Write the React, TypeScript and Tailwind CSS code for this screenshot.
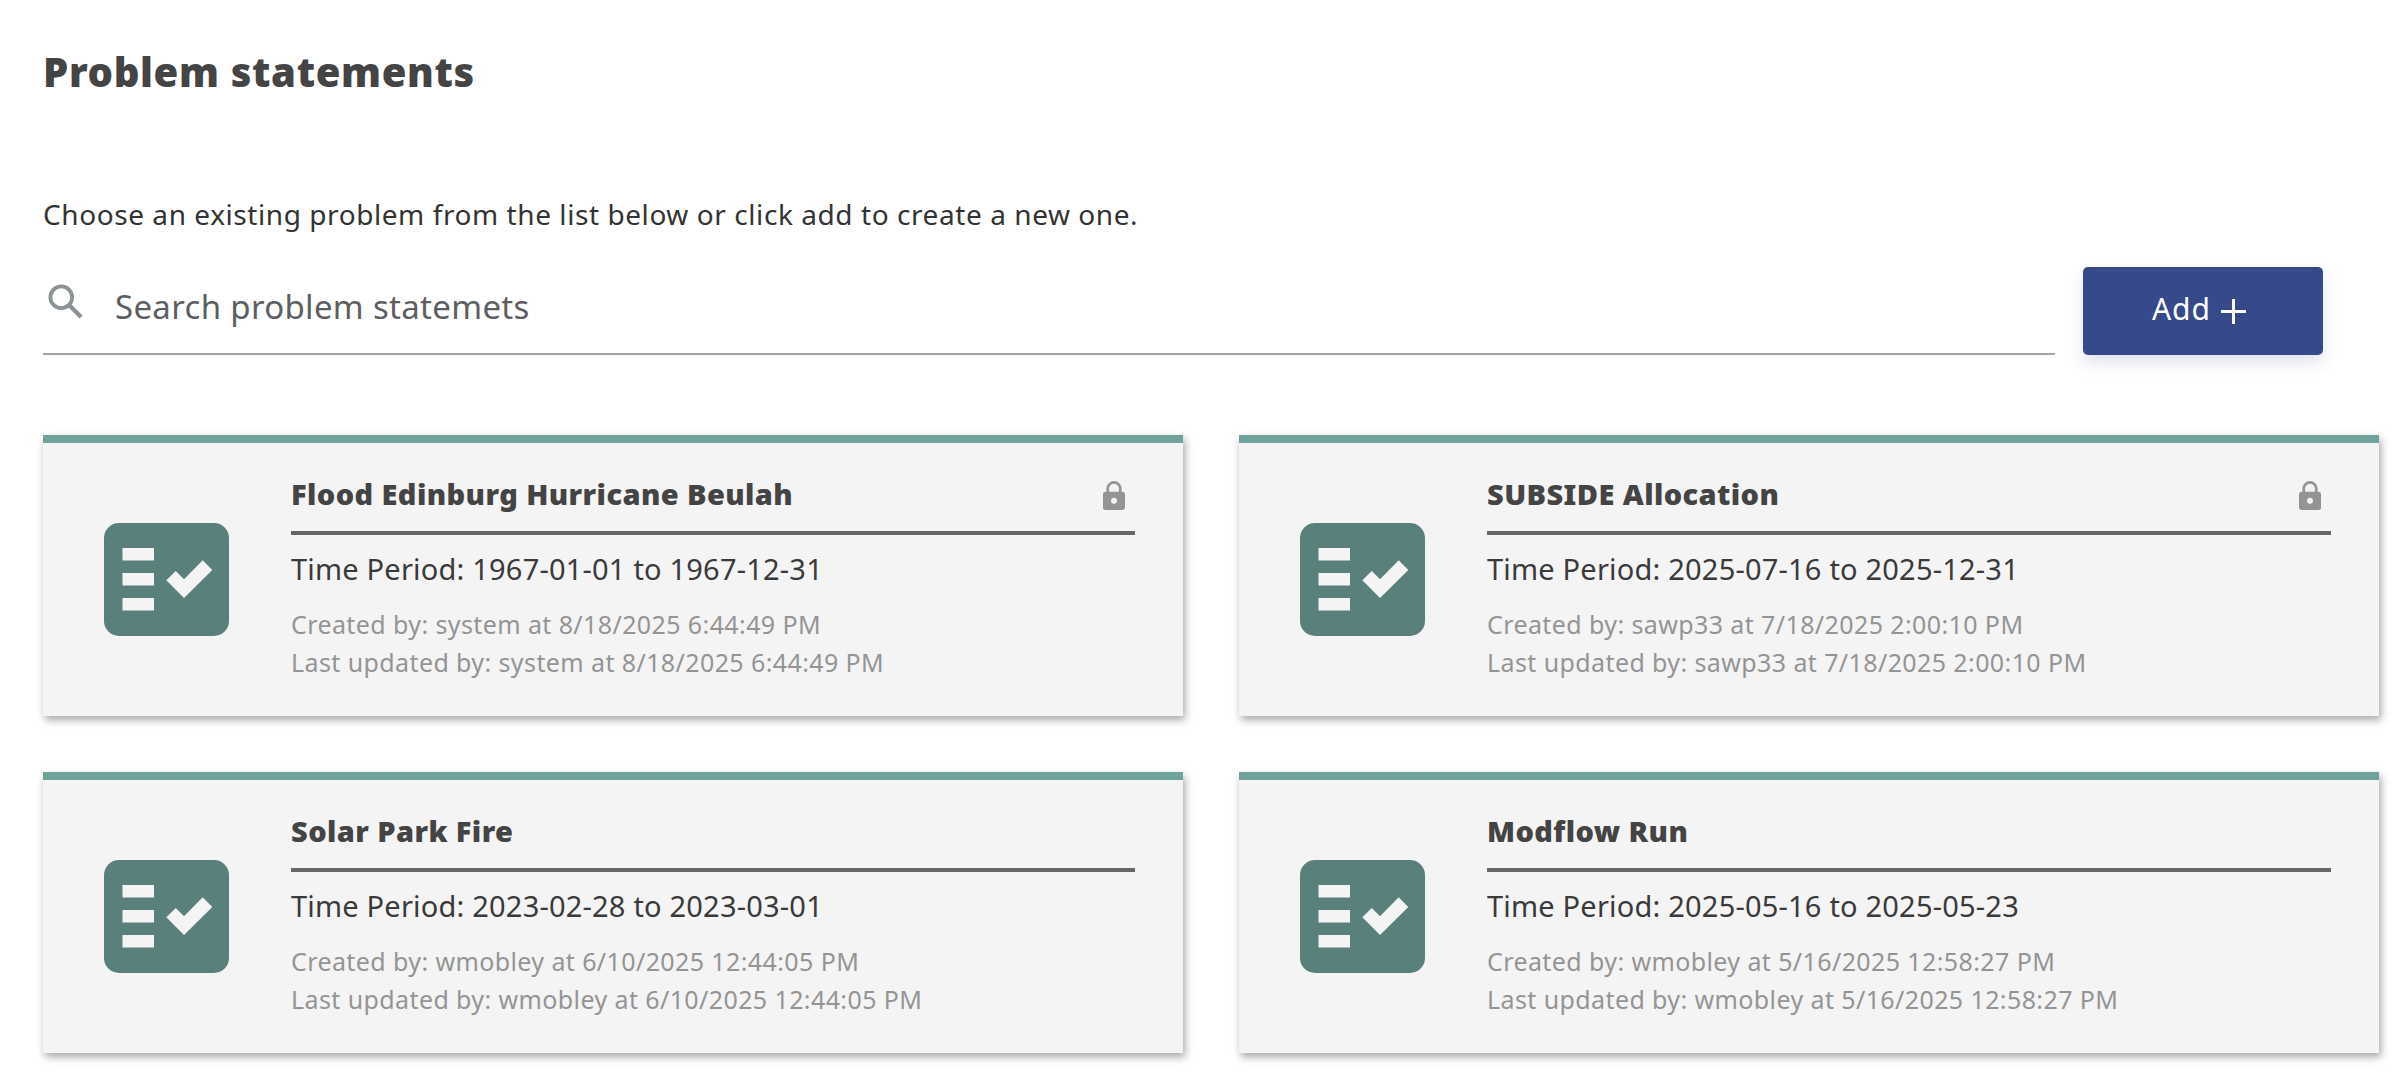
import React from "react";

const problems = [
  {
    title: "Flood Edinburg Hurricane Beulah",
    period: "Time Period: 1967-01-01 to 1967-12-31",
    created: "Created by: system at 8/18/2025 6:44:49 PM",
    updated: "Last updated by: system at 8/18/2025 6:44:49 PM",
    locked: true,
  },
  {
    title: "SUBSIDE Allocation",
    period: "Time Period: 2025-07-16 to 2025-12-31",
    created: "Created by: sawp33 at 7/18/2025 2:00:10 PM",
    updated: "Last updated by: sawp33 at 7/18/2025 2:00:10 PM",
    locked: true,
  },
  {
    title: "Solar Park Fire",
    period: "Time Period: 2023-02-28 to 2023-03-01",
    created: "Created by: wmobley at 6/10/2025 12:44:05 PM",
    updated: "Last updated by: wmobley at 6/10/2025 12:44:05 PM",
    locked: false,
  },
  {
    title: "Modflow Run",
    period: "Time Period: 2025-05-16 to 2025-05-23",
    created: "Created by: wmobley at 5/16/2025 12:58:27 PM",
    updated: "Last updated by: wmobley at 5/16/2025 12:58:27 PM",
    locked: false,
  },
];

function ChecklistIcon() {
  return (
    <svg className="w-[125px] h-[113px] shrink-0" viewBox="0 0 125 113">
      <rect width="125" height="113" rx="15" fill="#5a807b" />
      <rect x="18.5" y="25" width="31.5" height="12.5" fill="#f4f4f4" />
      <rect x="18.5" y="50" width="31.5" height="12.5" fill="#f4f4f4" />
      <rect x="18.5" y="75" width="31.5" height="12.5" fill="#f4f4f4" />
      <polygon
        points="62.3,57.3 80,75 108.3,47 98.7,37.3 80,56.3 71.8,48"
        fill="#f4f4f4"
      />
    </svg>
  );
}

function LockIcon() {
  return (
    <svg className="w-[22px] h-[29px]" viewBox="0 0 22 29">
      <path
        fill="#949494"
        fillRule="evenodd"
        d="M11 0a7.6 7.6 0 0 0-7.6 7.6v3.2H2.6A2.6 2.6 0 0 0 0 13.4v13A2.6 2.6 0 0 0 2.6 29h16.8a2.6 2.6 0 0 0 2.6-2.6v-13a2.6 2.6 0 0 0-2.6-2.6h-.8V7.6A7.6 7.6 0 0 0 11 0Zm0 2.7a4.9 4.9 0 0 1 4.9 4.9v3.2H6.1V7.6A4.9 4.9 0 0 1 11 2.7Zm0 14a3 3 0 1 1 0 6 3 3 0 0 1 0-6Z"
      />
    </svg>
  );
}

function SearchIcon() {
  return (
    <svg className="w-[37px] h-[35px] absolute left-[4px] top-[17px]" viewBox="0 0 37 37" fill="none">
      <circle cx="14" cy="14" r="11.5" stroke="#8b9397" strokeWidth="4" />
      <path d="M22.5 22.5 35 35" stroke="#8b9397" strokeWidth="4.5" />
    </svg>
  );
}

export default function App() {
  return (
    <div className="min-h-screen bg-white pl-[43px] pr-[25px] font-['Noto_Sans',sans-serif] text-[#333]">
      <h1 className="pt-[47px] text-[40px] leading-[50px] font-black tracking-[0.65px] text-[#444]">
        Problem statements
      </h1>
      <p className="mt-[97px] text-[28px] leading-[40px] tracking-[0.57px] text-[#333]">
        Choose an existing problem from the list below or click add to create a new one.
      </p>

      <div className="mt-[33px] mr-[56px] flex items-start gap-[28px]">
        <div className="relative flex-1 h-[88px] border-b-2 border-[#a3a6a8]">
          <SearchIcon />
          <div className="pl-[72px] pt-[18px] text-[33px] leading-[44px] tracking-[0.32px] text-[#5c5f62]">
            Search problem statemets
          </div>
        </div>
        <button className="w-[240px] h-[88px] pr-[8px] flex items-center justify-center gap-[10px] rounded-[5px] bg-[#36498b] text-[30px] tracking-[1px] text-white shadow-[0_8px_16px_rgba(54,73,139,0.15)]">
          <span className="mb-[5px]">Add</span>
          <svg className="w-[25px] h-[25px]" viewBox="0 0 25 25">
            <path d="M0 12.5h25M12.5 0v25" stroke="#fff" strokeWidth="3" />
          </svg>
        </button>
      </div>

      <div className="mt-[80px] grid grid-cols-2 gap-[56px]">
        {problems.map((p) => (
          <div
            key={p.title}
            className="flex items-center border-t-8 border-[#70a29c] bg-[#f4f4f4] pl-[61px] pr-[48px] shadow-[2px_4px_8px_rgba(0,0,0,0.35)]"
          >
            <ChecklistIcon />
            <div className="ml-[62px] flex-1 pt-[33px] pb-[35px]">
              <div className="flex h-[59px] items-start justify-between border-b-4 border-[#666] pb-[19px]">
                <div className="text-[29px] leading-[36px] font-black tracking-[0.4px] text-[#444]">{p.title}</div>
                {p.locked && (
                  <div className="pt-[5px] pr-[10px]">
                    <LockIcon />
                  </div>
                )}
              </div>
              <div className="mt-[16px] text-[29px] leading-[36px] tracking-[0.2px] text-[#3a3a3a]">{p.period}</div>
              <div className="mt-[18px] text-[25px] leading-[38px] tracking-[0.4px] text-[#949494]">{p.created}</div>
              <div className="text-[25px] leading-[38px] tracking-[0.4px] text-[#949494]">{p.updated}</div>
            </div>
          </div>
        ))}
      </div>
    </div>
  );
}
